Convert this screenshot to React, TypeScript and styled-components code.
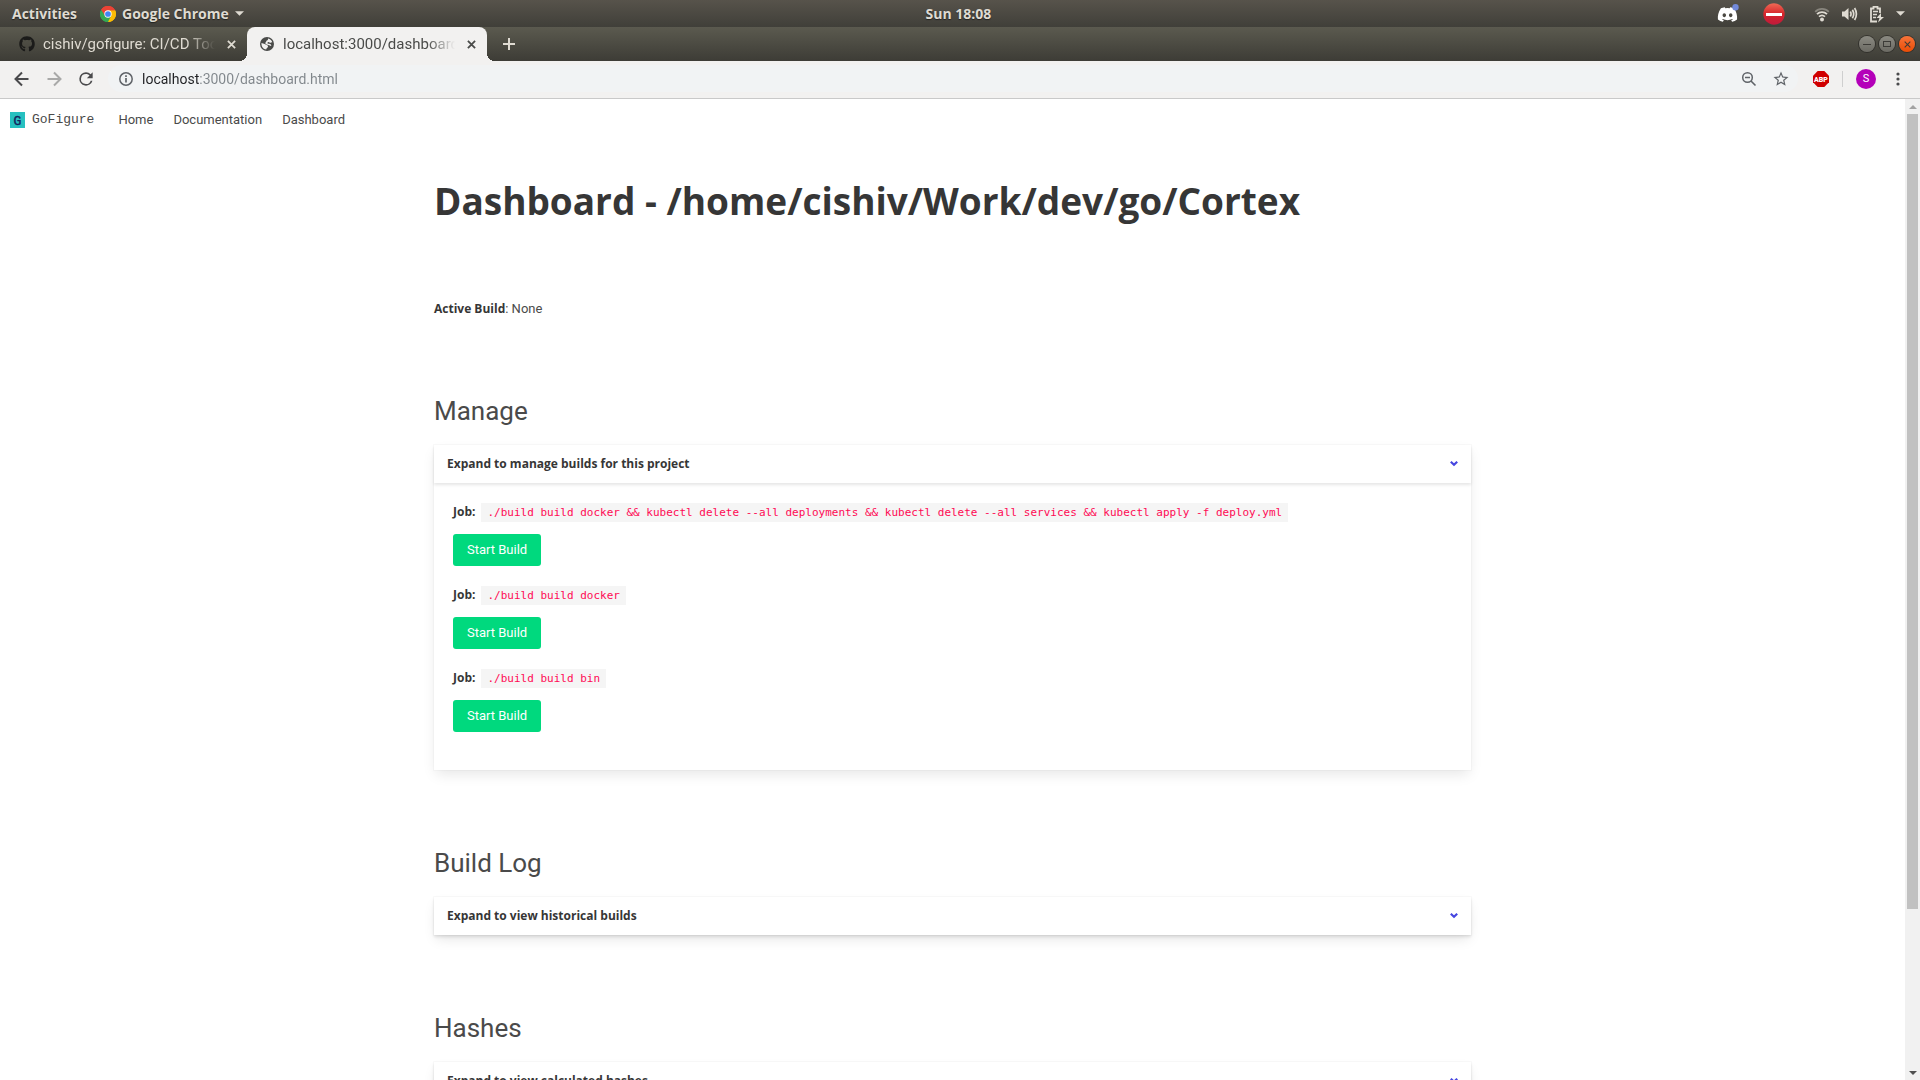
import React from "react";
import styled, { createGlobalStyle, css } from "styled-components";
import { FaGithub, FaDiscord } from "react-icons/fa";

const boldFont = `"Open Sans", "Noto Sans", sans-serif`;

const GlobalStyle = createGlobalStyle`
  *, *::before, *::after { box-sizing: border-box; }
  html, body { margin: 0; padding: 0; }
  body {
    font-family: Roboto, "Open Sans", sans-serif;
    font-size: 13px;
    line-height: 20px;
    color: #4a4a4a;
    background: #fff;
    overflow: hidden;
  }
  button, input { font: inherit; }
  a { color: inherit; text-decoration: none; }
  svg { display: block; flex: none; }
`;

const Desktop = styled.div`
  display: flex;
  flex-direction: column;
  height: 100vh;
`;

const bareButton = css`
  display: inline-flex;
  align-items: center;
  justify-content: center;
  padding: 0;
  border: 0;
  background: none;
  color: inherit;
  cursor: pointer;
`;

const IconButton = styled.button<{ $size?: number }>`
  ${bareButton}
  width: ${(p) => p.$size ?? 16}px;
  height: ${(p) => p.$size ?? 16}px;
  flex: none;
`;

/* ---------- desktop bar ---------- */

const TopBar = styled.header`
  display: grid;
  grid-template-columns: 1fr auto 1fr;
  align-items: center;
  height: 27px;
  flex: none;
  padding: 0 15px 0 12px;
  background: linear-gradient(#57534b, #403f39);
  color: #dfdbd2;
  font-family: ${boldFont};
  font-size: 14px;
  font-weight: 700;
  text-shadow: 0 1px 1px rgba(0, 0, 0, 0.5);
`;

const TopGroup = styled.div<{ $gap: number; $end?: boolean }>`
  display: flex;
  align-items: center;
  gap: ${(p) => p.$gap}px;
  justify-content: ${(p) => (p.$end ? "flex-end" : "flex-start")};
`;

const TopItem = styled.button`
  ${bareButton}
  gap: 6px;
  text-shadow: inherit;
`;

/* ---------- tab strip ---------- */

const TabStrip = styled.div`
  display: flex;
  align-items: stretch;
  height: 34px;
  flex: none;
  padding: 0 5px 0 7px;
  background: linear-gradient(#5b5a4f, #3d3c36);
`;

const Tab = styled.div<{ $active?: boolean }>`
  position: relative;
  display: flex;
  align-items: center;
  gap: 8px;
  width: 240px;
  padding: 0 8px 0 12px;
  font-size: 15px;
  color: ${(p) => (p.$active ? "#4a4b49" : "#dfdbd2")};
  ${(p) =>
    p.$active &&
    css`
      background: #f2f1f0;
      border-radius: 8px 8px 0 0;
      &::before,
      &::after {
        content: "";
        position: absolute;
        bottom: 0;
        width: 8px;
        height: 8px;
      }
      &::before {
        left: -8px;
        background: radial-gradient(circle at 0 0, transparent 8px, #f2f1f0 8px);
      }
      &::after {
        right: -8px;
        background: radial-gradient(circle at 100% 0, transparent 8px, #f2f1f0 8px);
      }
    `}
`;

const TabTitle = styled.a`
  flex: 1;
  min-width: 0;
  overflow: hidden;
  white-space: nowrap;
  mask-image: linear-gradient(90deg, #000 calc(100% - 28px), transparent);
`;

const NewTab = styled(IconButton)`
  align-self: center;
  margin-left: 14px;
  color: #dfdbd2;
`;

const WindowButtons = styled.div`
  display: flex;
  align-items: center;
  gap: 4px;
  margin-left: auto;
`;

const WindowButton = styled.button<{ $close?: boolean }>`
  ${bareButton}
  width: 16px;
  height: 16px;
  border-radius: 50%;
  color: #3c3b37;
  background: ${(p) => (p.$close ? "linear-gradient(#f7743a, #ea4c05)" : "linear-gradient(#8b8a82, #6b6a63)")};
  box-shadow: 0 0 0 1px rgba(45, 44, 40, 0.8);
`;

/* ---------- toolbar ---------- */

const Toolbar = styled.div`
  display: flex;
  align-items: center;
  height: 38px;
  flex: none;
  padding: 0 13px 2px 14px;
  background: #f2f1f0;
  border-bottom: 1px solid #c9c9c9;
  color: #4a4a4c;
`;

const NavButtons = styled.div`
  display: flex;
  gap: 16px;
  margin-right: 14px;
`;

const Omnibox = styled.form`
  display: flex;
  align-items: center;
  flex: 1;
  height: 27px;
  margin: 0;
  padding: 0 9px 0 10px;
  border-radius: 14px;
  background: #f1f3f4;
  color: #5f6368;
`;

const Address = styled.input`
  flex: 1;
  min-width: 0;
  height: 20px;
  margin-left: 8px;
  padding: 0;
  border: 0;
  outline: 0;
  font-size: 14px;
  line-height: 20px;
  background: linear-gradient(90deg, #202124 57px, #80868b 57px);
  background-clip: text;
  color: transparent;
`;

const OmniActions = styled.div`
  display: flex;
  gap: 16px;
`;

const Extensions = styled.div`
  display: flex;
  align-items: center;
  gap: 13px;
  margin-left: 15px;
`;

const Divider = styled.span`
  width: 1px;
  height: 16px;
  background: #cfcfcf;
`;

const Avatar = styled.button`
  ${bareButton}
  width: 20px;
  height: 20px;
  border-radius: 50%;
  background: #b400b9;
  color: #fff;
  font-size: 11px;
`;

/* ---------- web page ---------- */

const Viewport = styled.div`
  display: flex;
  flex: 1;
  min-height: 0;
`;

const Page = styled.div`
  flex: 1;
  min-width: 0;
  overflow: hidden;
`;

const Navbar = styled.nav`
  display: flex;
  align-items: center;
  height: 42px;
  padding: 0 10px;
  gap: 20px;
`;

const Brand = styled.a`
  display: flex;
  align-items: center;
  gap: 7px;
  margin-right: 4px;
  font-family: "Liberation Mono", monospace;
`;

const Container = styled.main`
  max-width: 1037px;
  margin: 0 auto;
  padding-top: 38px;
`;

const Title = styled.h1`
  margin: 0;
  font-family: ${boldFont};
  font-size: 37px;
  line-height: 44px;
  font-weight: 700;
  color: #363636;
`;

const Status = styled.p`
  margin: 76px 0 77px;
`;

const Strong = styled.strong`
  font-family: ${boldFont};
  font-size: 12px;
  font-weight: 700;
  color: #363636;
`;

const Section = styled.section`
  margin-bottom: 78px;
`;

const SectionTitle = styled.h2`
  margin: 0 0 19px;
  font-size: 26px;
  line-height: 30px;
  font-weight: 400;
`;

const Card = styled.article`
  background: #fff;
  box-shadow: 0 6px 13px -2px rgba(10, 10, 10, 0.1), 0 0 0 1px rgba(10, 10, 10, 0.02);
`;

const CardHeader = styled.button`
  display: flex;
  align-items: center;
  justify-content: space-between;
  width: 100%;
  height: 38px;
  padding: 0 13px;
  border: 0;
  background: transparent;
  box-shadow: 0 2px 3px rgba(10, 10, 10, 0.1);
  color: #363636;
  font-family: ${boldFont};
  font-size: 12px;
  font-weight: 700;
  text-align: left;
  cursor: pointer;
`;

const JobList = styled.ul`
  list-style: none;
  margin: 0;
  padding: 19px;
`;

const Job = styled.li`
  display: flex;
  flex-direction: column;
  align-items: flex-start;
  gap: 12px;
  padding-bottom: 19px;
`;

const JobLine = styled.div`
  display: flex;
  align-items: center;
  gap: 6px;
  height: 20px;
`;

const Command = styled.code`
  padding: 2px 6px;
  background: #f5f5f5;
  color: #ff0a54;
  font-family: "DejaVu Sans Mono", monospace;
  font-size: 11px;
  line-height: 15px;
`;

const StartButton = styled.button`
  height: 32px;
  padding: 0 14px;
  border: 0;
  border-radius: 3px;
  background: #00d97e;
  color: #fff;
  cursor: pointer;
`;

/* ---------- scrollbar ---------- */

const Scrollbar = styled.div`
  display: flex;
  flex-direction: column;
  width: 15px;
  flex: none;
  background: #f1f1f1;
`;

const ScrollStep = styled.button`
  ${bareButton}
  width: 15px;
  height: 15px;
  flex: none;
`;

const ScrollTrack = styled.div`
  display: grid;
  grid-template-rows: 795fr 156fr;
  flex: 1;
  padding: 0 2px;
`;

const ScrollThumb = styled.div`
  background: #c1c1c1;
`;

/* ---------- icons ---------- */

const ChromeLogo = () => (
  <svg width="16" height="16" viewBox="0 0 48 48" aria-hidden="true">
    <path d="M24 24 3.2 12A24 24 0 0 1 44.8 12Z" fill="#ea4335" />
    <path d="M24 24 44.8 12A24 24 0 0 1 24 48Z" fill="#fbbc05" />
    <path d="M24 24 24 48A24 24 0 0 1 3.2 12Z" fill="#34a853" />
    <path d="M24 13H45.3A24 24 0 0 1 24 48L33.5 29.5Z" fill="#fbbc05" />
    <path d="M14.5 29.5 3.2 12A24 24 0 0 1 45.3 13H24Z" fill="#ea4335" />
    <path d="M14.5 29.5 3.2 12A24 24 0 0 0 24 48L33.5 29.5Z" fill="#34a853" />
    <circle cx="24" cy="24" r="11" fill="#fff" />
    <circle cx="24" cy="24" r="8.6" fill="#4285f4" />
  </svg>
);

const Caret = ({ size = 9, up = false, color = "currentColor" }) => (
  <svg width={size} height={size} viewBox="0 0 10 10" aria-hidden="true">
    <path d={up ? "M0 7.5 5 2.5 10 7.5Z" : "M0 2.5H10L5 7.5Z"} fill={color} />
  </svg>
);

const GlobeIcon = () => (
  <svg width="16" height="16" viewBox="0 0 24 24" aria-hidden="true">
    <circle cx="12" cy="12" r="10.5" fill="#4a4b49" />
    <path
      fill="#f2f1f0"
      d="M3.8 10.4 8.500 12c1.500.4 1.500 1.300 2.800 1.500 1.800.3 2.600 1.300 2.100 2.800-.5 1.500-2.200 1.800-2.600 4C6.800 20 3.700 16.500 3.700 12c0-.6 0-1.100.1-1.600Z"
    />
    <path
      fill="#f2f1f0"
      d="M13.500 3.800c3 .5 5.400 2.700 6.400 5.400-1.400 0-2 1.300-3.400 1-1.200-.2-1.500-1.200-2.800-1-1.300.2-1.500 1.500-.5 2.200 1.200.8 3.300.2 4.600 1.300.6.600.700 1.300.600 2.100-1.600.2-2.600-.900-4.200-1.200-1.900-.3-4.300-.4-4.700-2.600-.2-1.500 1.200-2.100 1.500-3.300.2-1 1.600-.8 2.200-1.600.5-.7 0-1.500.3-2.300Z"
    />
  </svg>
);

const CloseIcon = ({ size = 9, width = 2 }) => (
  <svg width={size} height={size} viewBox="0 0 10 10" aria-hidden="true">
    <path d="M1 1 9 9M9 1 1 9" stroke="currentColor" strokeWidth={width} />
  </svg>
);

const PlusIcon = () => (
  <svg width="12" height="12" viewBox="0 0 12 12" aria-hidden="true">
    <path d="M6 0V12M0 6H12" stroke="currentColor" strokeWidth="2" />
  </svg>
);

const ArrowIcon = ({ forward = false }) => (
  <svg width="16" height="16" viewBox="0 0 16 16" aria-hidden="true">
    <path
      d={forward ? "M1.500 8H14M8 1.500 14.500 8 8 14.500" : "M14.500 8H2M8 1.500 1.500 8 8 14.500"}
      fill="none"
      stroke={forward ? "#a9a9a8" : "#4a4a4c"}
      strokeWidth="2"
    />
  </svg>
);

const ReloadIcon = () => (
  <svg width="20" height="20" viewBox="0 0 24 24" aria-hidden="true">
    <path
      fill="#4a4a4c"
      d="M17.650 6.350A7.960 7.960 0 0 0 12 4a8 8 0 1 0 7.730 10h-2.080A6 6 0 1 1 12 6c1.660 0 3.140.690 4.220 1.780L13 11h7V4l-2.350 2.350Z"
    />
  </svg>
);

const InfoIcon = () => (
  <svg width="16" height="16" viewBox="0 0 16 16" aria-hidden="true">
    <circle cx="8" cy="8" r="6.200" fill="none" stroke="currentColor" strokeWidth="1.500" />
    <path d="M8 7V11.500M8 4.300V6" stroke="currentColor" strokeWidth="1.700" />
  </svg>
);

const ZoomOutIcon = () => (
  <svg width="16" height="16" viewBox="0 0 16 16" aria-hidden="true">
    <circle cx="6.500" cy="6.500" r="4.800" fill="none" stroke="currentColor" strokeWidth="1.500" />
    <path d="M10 10 14.500 14.500M4 6.500H9" stroke="currentColor" strokeWidth="1.600" />
  </svg>
);

const StarIcon = () => (
  <svg width="18" height="18" viewBox="0 0 24 24" aria-hidden="true">
    <path
      fill="currentColor"
      d="m22 9.240-7.190-.620L12 2 9.190 8.630 2 9.240l5.460 4.730L5.820 21 12 17.270 18.180 21l-1.630-7.030L22 9.240ZM12 15.400l-3.760 2.270 1-4.280-3.320-2.880 4.380-.380L12 6.100l1.710 4.040 4.380.380-3.320 2.880 1 4.280L12 15.400Z"
    />
  </svg>
);

const AbpIcon = () => (
  <svg width="16" height="16" viewBox="0 0 16 16" aria-hidden="true">
    <path d="M4.700 0H11.300L16 4.700V11.300L11.300 16H4.700L0 11.300V4.700Z" fill="#d00000" />
    <text x="8" y="11" fontFamily="Roboto, sans-serif" fontSize="7" fontWeight="900" fill="#fff" textAnchor="middle">
      ABP
    </text>
  </svg>
);

const DotsIcon = () => (
  <svg width="16" height="16" viewBox="0 0 16 16" aria-hidden="true" fill="#4a4a4c">
    <circle cx="8" cy="3" r="1.600" />
    <circle cx="8" cy="8" r="1.600" />
    <circle cx="8" cy="13" r="1.600" />
  </svg>
);

const DiscordIcon = () => (
  <svg width="22" height="20" viewBox="0 0 22 20" aria-hidden="true">
    <FaDiscord x="0" y="0" size={21} color="#fff" />
    <circle cx="18.500" cy="3.200" r="3.200" fill="#7289da" />
  </svg>
);

const NoEntryIcon = () => (
  <svg width="22" height="22" viewBox="0 0 22 22" aria-hidden="true">
    <defs>
      <linearGradient id="entry" x2="0" y2="1">
        <stop offset="0" stopColor="#ef6a55" />
        <stop offset="0.5" stopColor="#d6242a" />
        <stop offset="1" stopColor="#c01a3c" />
      </linearGradient>
    </defs>
    <circle cx="11" cy="11" r="10.700" fill="url(#entry)" />
    <rect x="3" y="10" width="16" height="3" fill="#fff" />
  </svg>
);

const WifiIcon = () => (
  <svg width="16" height="16" viewBox="0 0 16 16" aria-hidden="true" fill="none" stroke="#dfdbd2" strokeWidth="1.800">
    <path d="M1.200 5.800A9.500 9.500 0 0 1 14.800 5.800" opacity="0.400" />
    <path d="M3 8.200A7 7 0 0 1 13 8.200" />
    <path d="M5 10.700A4.500 4.500 0 0 1 11 10.700" />
    <circle cx="8" cy="13.500" r="2" fill="#dfdbd2" stroke="none" />
  </svg>
);

const VolumeIcon = () => (
  <svg width="16" height="16" viewBox="0 0 16 16" aria-hidden="true">
    <path d="M0 5.500H2.500L6.500 2V14L2.500 10.500H0Z" fill="#dfdbd2" />
    <path
      d="M8.300 5.500Q9.800 8 8.300 10.500M10.400 3.700Q13 8 10.400 12.300M12.600 2Q16.200 8 12.600 14"
      fill="none"
      stroke="#dfdbd2"
      strokeWidth="1.700"
    />
  </svg>
);

const BatteryIcon = () => (
  <svg width="14" height="18" viewBox="1 0 14 18" aria-hidden="true">
    <path d="M8 16.500H2V3.500H4.500V1.800H8.500V3.500H11V8" fill="none" stroke="#dfdbd2" strokeWidth="1.800" />
    <path d="M4 6.500H9M4 9.500H8M4 12.500H7" stroke="#dfdbd2" strokeWidth="1.500" />
    <path d="M12 8 7.500 13H10.500L9 17.500 15 12H12Z" fill="#dfdbd2" />
  </svg>
);

const LogoIcon = () => (
  <svg width="15" height="16" viewBox="0 0 15 16" aria-hidden="true">
    <rect width="15" height="16" fill="#27c0c0" />
    <text x="7.500" y="13" fontFamily="Liberation Mono, monospace" fontSize="13" fill="#14235e" stroke="#14235e" strokeWidth="0.400" textAnchor="middle">
      G
    </text>
  </svg>
);

const ChevronIcon = () => (
  <svg width="8" height="6" viewBox="0 0 8 6" aria-hidden="true">
    <path d="M0.800 0.800 4 3.800 7.200 0.800" fill="none" stroke="#4646e0" strokeWidth="2.200" />
  </svg>
);

const ChevronSlot = styled.span`
  display: flex;
`;

/* ---------- content ---------- */

const jobs = [
  "./build build docker && kubectl delete --all deployments && kubectl delete --all services && kubectl apply -f deploy.yml",
  "./build build docker",
  "./build build bin",
];

function Panel({ title, label, children }: { title: string; label: string; children?: React.ReactNode }) {
  return (
    <Section>
      <SectionTitle>{title}</SectionTitle>
      <Card>
        <CardHeader type="button" aria-expanded={Boolean(children)}>
          {label}
          <ChevronSlot>
            <ChevronIcon />
          </ChevronSlot>
        </CardHeader>
        {children}
      </Card>
    </Section>
  );
}

export default function App() {
  return (
    <Desktop>
      <GlobalStyle />
      <TopBar>
        <TopGroup $gap={23}>
          <TopItem>Activities</TopItem>
          <TopItem>
            <ChromeLogo />
            Google Chrome
            <Caret />
          </TopItem>
        </TopGroup>
        <TopItem>Sun 18:08</TopItem>
        <TopGroup $gap={29} $end>
          <TopGroup $gap={24}>
            <DiscordIcon />
            <NoEntryIcon />
          </TopGroup>
          <TopGroup $gap={12}>
            <WifiIcon />
            <VolumeIcon />
            <BatteryIcon />
            <Caret />
          </TopGroup>
        </TopGroup>
      </TopBar>

      <TabStrip>
        <Tab>
          <FaGithub size={16} color="#1b1b1a" />
          <TabTitle href="#gofigure">cishiv/gofigure: CI/CD Tool</TabTitle>
          <IconButton aria-label="Close tab">
            <CloseIcon />
          </IconButton>
        </Tab>
        <Tab $active>
          <GlobeIcon />
          <TabTitle href="#dashboard">localhost:3000/dashboard.html</TabTitle>
          <IconButton aria-label="Close tab">
            <CloseIcon />
          </IconButton>
        </Tab>
        <NewTab aria-label="New tab">
          <PlusIcon />
        </NewTab>
        <WindowButtons>
          <WindowButton aria-label="Minimize">
            <svg width="8" height="8" viewBox="0 0 8 8">
              <path d="M0 4.500H8" stroke="currentColor" />
            </svg>
          </WindowButton>
          <WindowButton aria-label="Maximize">
            <svg width="8" height="8" viewBox="0 0 8 8">
              <rect x="0.500" y="1.500" width="7" height="5" fill="none" stroke="currentColor" />
            </svg>
          </WindowButton>
          <WindowButton aria-label="Close" $close>
            <CloseIcon size={7} width={1.5} />
          </WindowButton>
        </WindowButtons>
      </TabStrip>

      <Toolbar>
        <NavButtons>
          <IconButton aria-label="Back">
            <ArrowIcon />
          </IconButton>
          <IconButton aria-label="Forward">
            <ArrowIcon forward />
          </IconButton>
          <IconButton aria-label="Reload">
            <ReloadIcon />
          </IconButton>
        </NavButtons>
        <Omnibox>
          <InfoIcon />
          <Address aria-label="Address" defaultValue="localhost:3000/dashboard.html" />
          <OmniActions>
            <IconButton type="button" aria-label="Zoom out">
              <ZoomOutIcon />
            </IconButton>
            <IconButton type="button" aria-label="Bookmark">
              <StarIcon />
            </IconButton>
          </OmniActions>
        </Omnibox>
        <Extensions>
          <IconButton aria-label="Ad blocker">
            <AbpIcon />
          </IconButton>
          <Divider />
          <Avatar>S</Avatar>
          <IconButton aria-label="Menu" $size={18}>
            <DotsIcon />
          </IconButton>
        </Extensions>
      </Toolbar>

      <Viewport>
        <Page>
          <Navbar>
            <Brand href="#home">
              <LogoIcon />
              GoFigure
            </Brand>
            <a href="#home">Home</a>
            <a href="#documentation">Documentation</a>
            <a href="#dashboard">Dashboard</a>
          </Navbar>
          <Container>
            <Title>Dashboard - /home/cishiv/Work/dev/go/Cortex</Title>
            <Status>
              <Strong>Active Build</Strong>: None
            </Status>
            <Panel title="Manage" label="Expand to manage builds for this project">
              <JobList>
                {jobs.map((job) => (
                  <Job key={job}>
                    <JobLine>
                      <Strong>Job:</Strong>
                      <Command>{job}</Command>
                    </JobLine>
                    <StartButton type="button">Start Build</StartButton>
                  </Job>
                ))}
              </JobList>
            </Panel>
            <Panel title="Build Log" label="Expand to view historical builds" />
            <Panel title="Hashes" label="Expand to view calculated hashes" />
          </Container>
        </Page>
        <Scrollbar>
          <ScrollStep aria-label="Scroll up">
            <Caret size={8} up color="#a3a3a3" />
          </ScrollStep>
          <ScrollTrack>
            <ScrollThumb />
          </ScrollTrack>
          <ScrollStep aria-label="Scroll down">
            <Caret size={8} color="#505050" />
          </ScrollStep>
        </Scrollbar>
      </Viewport>
    </Desktop>
  );
}
